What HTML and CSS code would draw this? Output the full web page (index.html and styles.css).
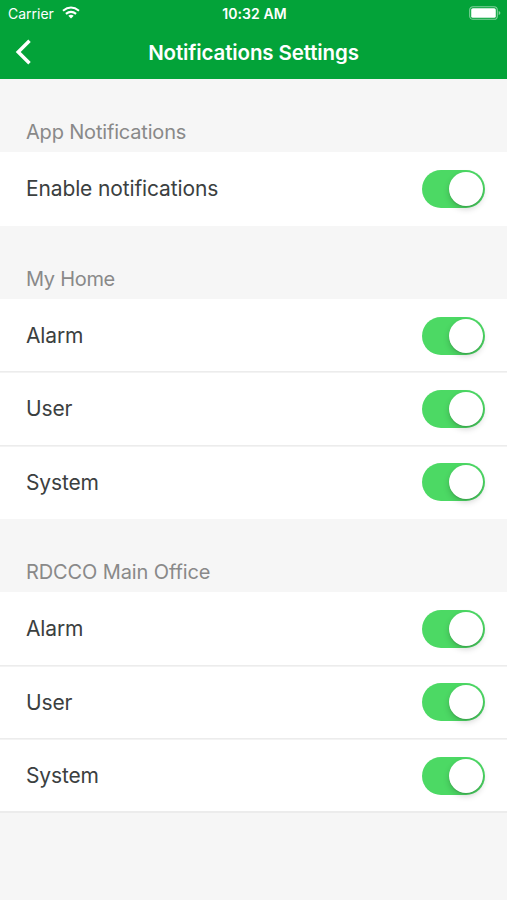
FILE: index.html
```
<!DOCTYPE html>
<html lang="en">
<head>
<meta charset="utf-8">
<title>Notifications Settings</title>
<link rel="stylesheet" href="styles.css">
</head>
<body>
<header class="top">
  <div class="status">
    <div class="carrier"><span>Carrier</span>
      <svg class="wifi" viewBox="0 0 18 13" width="18" height="13"><g fill="none" stroke="#fff" stroke-width="2.1"><path d="M1 4.7Q9-1.7 17 4.7"/><path d="M3.9 7.9Q9 3.7 14.1 7.9"/></g><path fill="#fff" d="M6.3 9.8Q9 7.7 11.7 9.8L9 12.6Z"/></svg>
    </div>
    <time class="time">10:32 AM</time>
    <svg class="battery" viewBox="0 0 32 14" width="32" height="14"><rect x=".7" y=".7" width="27.6" height="12.6" rx="3.4" fill="none" stroke="#fff" stroke-opacity=".5" stroke-width="1.1"/><rect x="2.2" y="2.2" width="24.6" height="9.6" rx="1.6" fill="#fff"/><path d="M29.7 5v4q1.7-.7 1.7-2t-1.7-2Z" fill="#fff" fill-opacity=".5"/></svg>
  </div>
  <div class="nav">
    <svg class="back" viewBox="0 0 18 28" width="18" height="28"><path d="M14.5 2.7 3.2 14l11.3 11.3" fill="none" stroke="#fff" stroke-width="3.5"/></svg>
    <h1 class="title">Notifications Settings</h1>
  </div>
</header>
<main class="settings">
  <h2 class="group">App Notifications</h2>
  <div class="row"><span>Enable notifications</span><i class="switch"></i></div>
  <h2 class="group home">My Home</h2>
  <div class="row"><span>Alarm</span><i class="switch"></i></div>
  <div class="row"><span>User</span><i class="switch"></i></div>
  <div class="row"><span>System</span><i class="switch"></i></div>
  <h2 class="group office">RDCCO Main Office</h2>
  <div class="row"><span>Alarm</span><i class="switch"></i></div>
  <div class="row"><span>User</span><i class="switch"></i></div>
  <div class="row last"><span>System</span><i class="switch"></i></div>
</main>
</body>
</html>
```
FILE: styles.css
```
* { box-sizing: border-box; }
body { margin: 0; min-height: 900px; background: #f6f6f6; font-family: Inter, sans-serif; color: #3b403f; overflow: hidden; }
.top { height: 79px; background: #03a339; color: #fff; }
.status { height: 27px; display: grid; grid-template-columns: 1fr auto 1fr; align-items: center; padding: 0 6px 0 8px; font-size: 14px; }
.carrier { display: flex; align-items: center; gap: 8px; }
.wifi { margin-top: -2px; }
.time { font-weight: 600; letter-spacing: .1px; }
.battery { justify-self: end; margin-top: -2px; }
.nav { height: 51px; display: grid; grid-template-columns: 60px 1fr 60px; align-items: center; }
.back { margin: -1px 0 0 15px; }
.title { margin: 0; text-align: center; font-size: 20.5px; font-weight: 600; letter-spacing: -.12px; white-space: nowrap; }
.group { margin: 0; height: 73.33px; padding: 40px 26px 0; font-size: 20px; line-height: 26px; font-weight: 400; letter-spacing: -.18px; color: #898989; }
.home { letter-spacing: -.3px; }
.office { letter-spacing: -.12px; }
.row { height: 73.33px; padding: 1px 22px 0 26px; display: flex; align-items: center; justify-content: space-between; background: #fff; font-size: 21px; line-height: 28px; letter-spacing: -.13px; }
.row + .row { position: relative; box-shadow: 0 -1px #ececec, inset 0 1px #f3f3f3; }
.row.last { box-shadow: 0 -1px #ececec, inset 0 1px #f3f3f3, 0 1px #ececec, inset 0 -1px #ececec; }
.switch { width: 63px; height: 38px; padding: 2px; display: flex; justify-content: flex-end; border-radius: 19px; background: #4cd964; margin-top: -1px; }
.switch::after { content: ""; width: 34px; height: 34px; border-radius: 50%; background: #fff; box-shadow: 0 3px 6px rgba(0,0,0,.18), 0 1px 1px rgba(0,0,0,.12); }
```
